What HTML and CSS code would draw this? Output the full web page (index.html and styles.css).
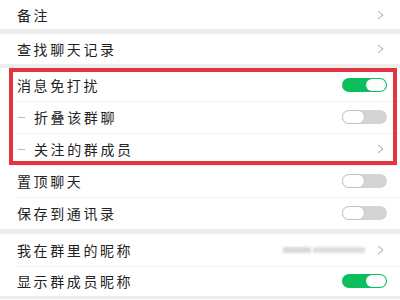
FILE: index.html
```html
<!DOCTYPE html>
<html lang="zh-CN">
<head>
    <meta charset="UTF-8">
    <meta name="viewport" content="width=device-width, initial-scale=1.0">
    <title>聊天信息</title>
    <link rel="stylesheet" href="styles.css">
</head>
<body>
    <div class="group">
        <div class="row row-top">
            <span class="label">备注</span>
            <svg class="chevron" width="7" height="10" viewBox="0 0 7 10"><polyline points="1,1 6,5 1,9"/></svg>
        </div>
    </div>

    <div class="group">
        <div class="row row-short">
            <span class="label">查找聊天记录</span>
            <svg class="chevron" width="7" height="10" viewBox="0 0 7 10"><polyline points="1,1 6,5 1,9"/></svg>
        </div>
    </div>

    <div class="group highlight-wrap">
        <div class="row row-first">
            <span class="label">消息免打扰</span>
            <span class="switch on"></span>
        </div>
        <div class="row sub">
            <span class="dash"></span>
            <span class="label">折叠该群聊</span>
            <span class="switch"></span>
        </div>
        <div class="row sub">
            <span class="dash"></span>
            <span class="label">关注的群成员</span>
            <svg class="chevron" width="7" height="10" viewBox="0 0 7 10"><polyline points="1,1 6,5 1,9"/></svg>
        </div>
        <div class="row">
            <span class="label">置顶聊天</span>
            <span class="switch"></span>
        </div>
        <div class="row">
            <span class="label">保存到通讯录</span>
            <span class="switch"></span>
        </div>
        <div class="highlight"></div>
    </div>

    <div class="group">
        <div class="row">
            <span class="label">我在群里的昵称</span>
            <span class="nickname">
                <span class="blur blur-a"></span>
                <span class="blur blur-b"></span>
            </span>
            <svg class="chevron" width="7" height="10" viewBox="0 0 7 10"><polyline points="1,1 6,5 1,9"/></svg>
        </div>
        <div class="row row-short">
            <span class="label">显示群成员昵称</span>
            <span class="switch on"></span>
        </div>
    </div>

    <div class="group tail"></div>
</body>
</html>
```

FILE: styles.css
```css
body {
    margin: 0;
    background-color: #ededed;
    font-family: "Noto Sans CJK SC", "Noto Sans", sans-serif;
    color: #222;
    overflow: hidden;
}
.group {
    background-color: #fff;
    margin-bottom: 5px;
}
.row {
    display: flex;
    align-items: center;
    height: 32px;
    padding: 0 13px 0 17px;
    box-sizing: border-box;
    position: relative;
}
.row + .row::before {
    content: "";
    position: absolute;
    left: 17px;
    right: 0;
    top: 0;
    border-top: 1px solid #f0f0f0;
}
.row-top {
    height: 29px;
}
.row-short {
    height: 30px;
}
.row-first {
    height: 33px;
}
.label {
    flex: 1;
    font-size: 14px;
    letter-spacing: 2.6px;
    white-space: nowrap;
}
.dash {
    width: 7px;
    border-top: 1px solid #b8b8b8;
    margin: 0 9px 0 1px;
}
.chevron {
    margin-right: 3px;
    fill: none;
    stroke: #a0a0a0;
    stroke-width: 1;
}
.switch {
    width: 45px;
    height: 14px;
    border-radius: 7px;
    background-color: #d3d3d3;
    position: relative;
}
.switch::after {
    content: "";
    position: absolute;
    top: 0;
    left: 0;
    width: 21px;
    height: 12px;
    border: 1px solid #c4c4c4;
    border-radius: 7px;
    background-color: #fff;
}
.switch.on {
    background-color: #0cbf5c;
}
.switch.on::after {
    left: auto;
    right: 1px;
    top: 1px;
    height: 12px;
    width: 20px;
    border: none;
}
.nickname {
    display: flex;
    align-items: center;
    margin-right: 12px;
}
.blur {
    height: 6px;
    background-color: #d9d9d9;
    filter: blur(1px);
}
.blur-a {
    width: 28px;
}
.blur-b {
    width: 52px;
    margin-left: 2px;
    background-color: #dedede;
}
.tail {
    height: 20px;
    margin-top: -2px;
}
.highlight-wrap {
    position: relative;
    margin-top: -1px;
}
.highlight {
    position: absolute;
    left: 9px;
    right: 3px;
    top: 0;
    height: 97px;
    border: 4px solid #e3353f;
    box-sizing: border-box;
}
```
